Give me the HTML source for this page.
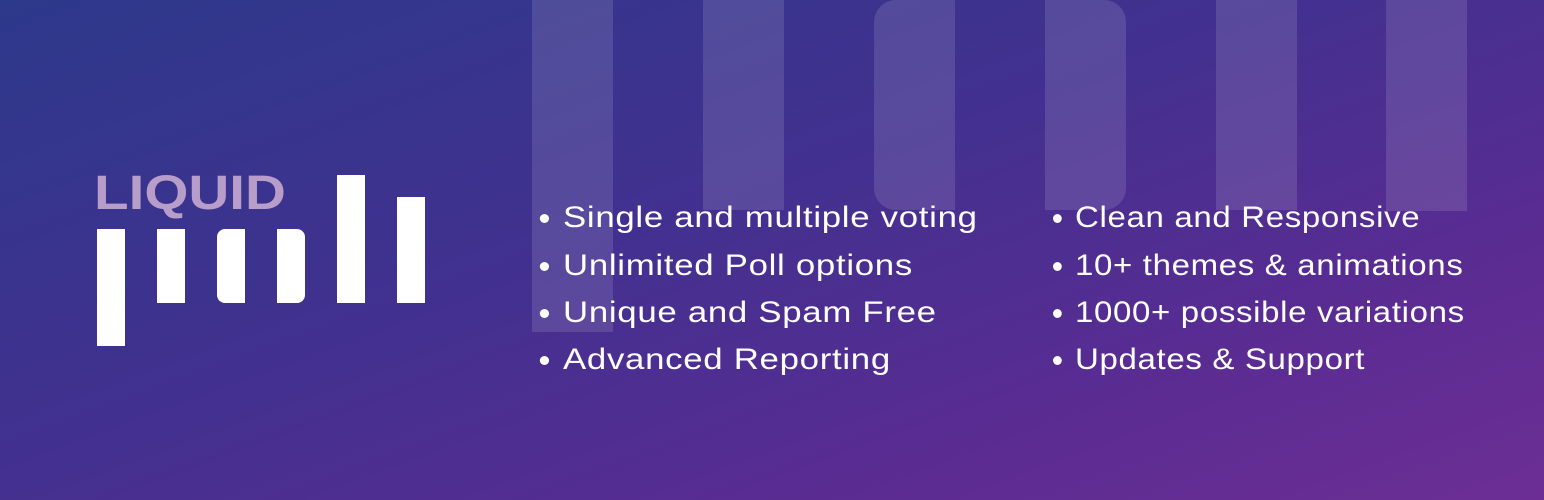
<!DOCTYPE html><html><head><style>
body{margin:0}
.w{position:relative;width:1544px;height:500px;overflow:hidden;background:linear-gradient(160deg,#2d398b 0%,#433090 45%,#5a2c92 75%,#6c2e95 100%);font-family:"Liberation Sans",sans-serif}
.b{position:absolute;background:rgba(255,255,255,0.12)}
.l{position:absolute;background:#fff}
.t{position:absolute;color:#fff;font-size:30px;letter-spacing:0.6px;white-space:nowrap;line-height:34px;transform:scaleX(1.16);transform-origin:0 0}
.c2{transform:scaleX(1.1)}
.t::before{content:"";position:absolute;left:-20px;top:13px;width:8px;height:9px;border-radius:50%;background:#fff}
</style></head><body><div class="w">
<div class="b" style="left:532px;top:0;width:81px;height:332px"></div>
<div class="b" style="left:703px;top:0;width:81px;height:210px"></div>
<div class="b" style="left:874px;top:0;width:81px;height:210px;border-radius:22px 0 0 22px"></div>
<div class="b" style="left:1045px;top:0;width:81px;height:210px;border-radius:0 22px 22px 0"></div>
<div class="b" style="left:1216px;top:0;width:81px;height:210px"></div>
<div class="b" style="left:1386px;top:0;width:81px;height:211px"></div>
<div style="position:absolute;left:94px;top:168px;font-size:48px;font-weight:bold;color:#b89dcb;line-height:52px;transform:scaleX(1.18);transform-origin:0 0">LIQUID</div>
<div class="l" style="left:97px;top:229px;width:28px;height:117px"></div>
<div class="l" style="left:157px;top:229px;width:28px;height:74px"></div>
<div class="l" style="left:217px;top:229px;width:28px;height:74px;border-radius:8px 0 0 8px"></div>
<div class="l" style="left:277px;top:229px;width:28px;height:74px;border-radius:0 8px 8px 0"></div>
<div class="l" style="left:337px;top:175px;width:28px;height:128px"></div>
<div class="l" style="left:397px;top:197px;width:28px;height:106px"></div>
<div class="t" style="left:563px;top:201px">Single and multiple voting</div>
<div class="t" style="left:563px;top:249px">Unlimited Poll options</div>
<div class="t" style="left:563px;top:296px">Unique and Spam Free</div>
<div class="t" style="left:563px;top:343px">Advanced Reporting</div>
<div class="t c2" style="left:1075px;top:201px">Clean and Responsive</div>
<div class="t c2" style="left:1075px;top:249px">10+ themes &amp; animations</div>
<div class="t c2" style="left:1075px;top:296px">1000+ possible variations</div>
<div class="t c2" style="left:1075px;top:343px">Updates &amp; Support</div>
</div></body></html>
